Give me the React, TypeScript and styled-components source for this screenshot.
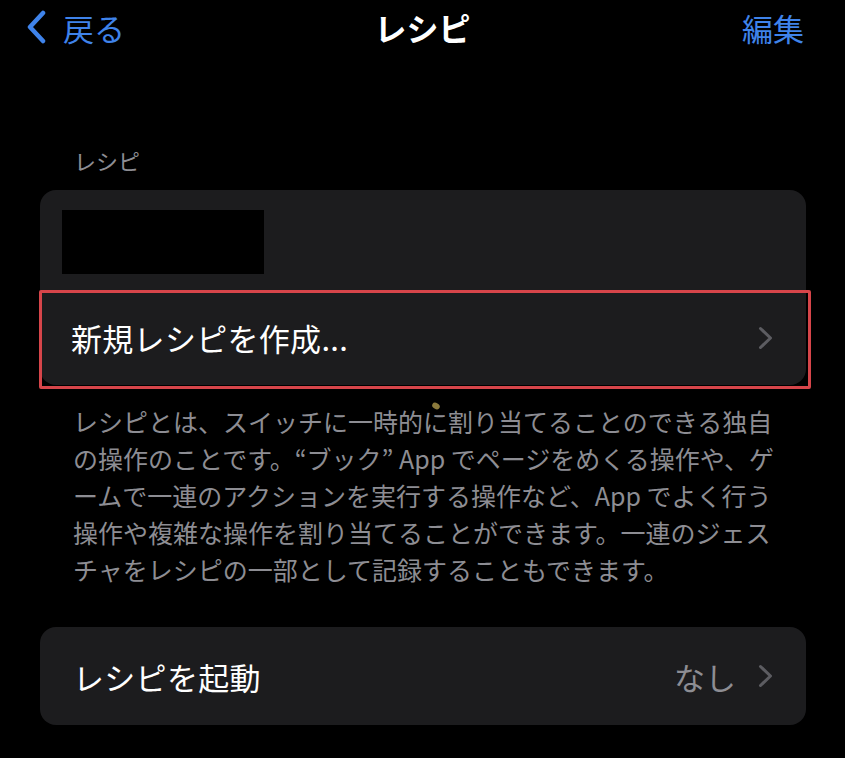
import styled, { createGlobalStyle } from "styled-components";

const GlobalStyle = createGlobalStyle`
  html, body {
    margin: 0;
    padding: 0;
    background: #000;
  }
  body {
    font-family: "Noto Sans CJK JP", "Noto Sans", sans-serif;
    color: #fff;
  }
`;

const FOOTER_LINES = [
  "レシピとは、スイッチに一時的に割り当てることのできる独自",
  "の操作のことです。“ブック” App でページをめくる操作や、ゲ",
  "ームで一連のアクションを実行する操作など、App でよく行う",
  "操作や複雑な操作を割り当てることができます。一連のジェス",
  "チャをレシピの一部として記録することもできます。",
];

const Chevron = () => (
  <svg width="15" height="24" viewBox="0 0 15 24" fill="none">
    <path
      d="M2.5 2.5 L12.5 12 L2.5 21.5"
      stroke="#5c5c61"
      strokeWidth="3"
      strokeLinecap="round"
      strokeLinejoin="round"
    />
  </svg>
);

const App = () => {
  return (
    <Page>
      <GlobalStyle />
      <NavBar>
        <BackButton>
          <svg width="22" height="34" viewBox="0 0 22 34" fill="none">
            <path
              d="M18 3 L5 17 L18 31"
              stroke="#3f83ea"
              strokeWidth="4.5"
              strokeLinecap="round"
              strokeLinejoin="round"
            />
          </svg>
          戻る
        </BackButton>
        <Title>レシピ</Title>
        <EditButton>編集</EditButton>
      </NavBar>

      <Main>
        <SectionHeader>レシピ</SectionHeader>
        <Card>
          <RedactedRow>
            <Redacted />
          </RedactedRow>
          <Row $highlighted>
            <RowLabel>新規レシピを作成...</RowLabel>
            <Chevron />
          </Row>
        </Card>
        <Footer>
          <Spot />
          {FOOTER_LINES.map((line) => (
            <FooterLine key={line}>{line}</FooterLine>
          ))}
        </Footer>

        <Card>
          <Row>
            <RowLabel>レシピを起動</RowLabel>
            <RowValue>なし</RowValue>
            <Chevron />
          </Row>
        </Card>
      </Main>
    </Page>
  );
};

export default App;

const Page = styled.div`
  width: 845px;
  min-height: 758px;
  background: #000;
`;

const NavBar = styled.header`
  display: grid;
  grid-template-columns: 1fr auto 1fr;
  align-items: center;
  height: 54px;
  padding: 0 25px 6px 25px;
`;

const BackButton = styled.div`
  display: flex;
  align-items: center;
  gap: 16px;
  font-size: 31px;
  line-height: 1;
  color: #3f83ea;
  justify-self: start;
`;

const Title = styled.h1`
  margin: 0;
  font-size: 32px;
  font-weight: 700;
  line-height: 1;
  color: #fff;
`;

const EditButton = styled.div`
  justify-self: end;
  margin-right: 16px;
  font-size: 31px;
  line-height: 1;
  color: #3f83ea;
`;

const Main = styled.main`
  padding: 85px 39px 0 40px;
`;

const SectionHeader = styled.div`
  padding-left: 34px;
  margin-bottom: 15px;
  font-size: 22px;
  line-height: 30px;
  color: #8d8d93;
`;

const Card = styled.section`
  background: #1c1c1e;
  border-radius: 16px;
`;

const RedactedRow = styled.div`
  height: 100px;
  padding: 20px 0 0 22px;
  box-sizing: border-box;
`;

const Redacted = styled.div`
  width: 202px;
  height: 64px;
  background: #000;
`;

const Row = styled.div<{ $highlighted?: boolean }>`
  position: relative;
  display: flex;
  align-items: center;
  gap: 22px;
  height: ${({ $highlighted }) => ($highlighted ? "95px" : "98px")};
  padding: 0 33px 0 33px;

  ${({ $highlighted }) =>
    $highlighted &&
    `
    padding-left: 31px;
    &::after {
      content: "";
      position: absolute;
      left: -1px;
      right: -5px;
      top: 0;
      bottom: -4px;
      border: 3px solid #d6454a;
      border-radius: 2px;
    }
  `}
`;

const RowLabel = styled.span`
  flex: 1;
  font-size: 31px;
  line-height: 1;
  color: #fff;
  letter-spacing: 0.3px;
`;

const RowValue = styled.span`
  font-size: 31px;
  line-height: 1;
  color: #8d8d93;
`;

const Footer = styled.div`
  position: relative;
  padding: 18px 0 39px 33px;
`;

const FooterLine = styled.div`
  font-size: 25px;
  line-height: 37px;
  color: #8d8d93;
  white-space: nowrap;
`;

const Spot = styled.span`
  position: absolute;
  left: 392px;
  top: 18px;
  width: 8px;
  height: 6px;
  border-radius: 50%;
  background: #8b7a3c;
  transform: rotate(30deg);
`;
